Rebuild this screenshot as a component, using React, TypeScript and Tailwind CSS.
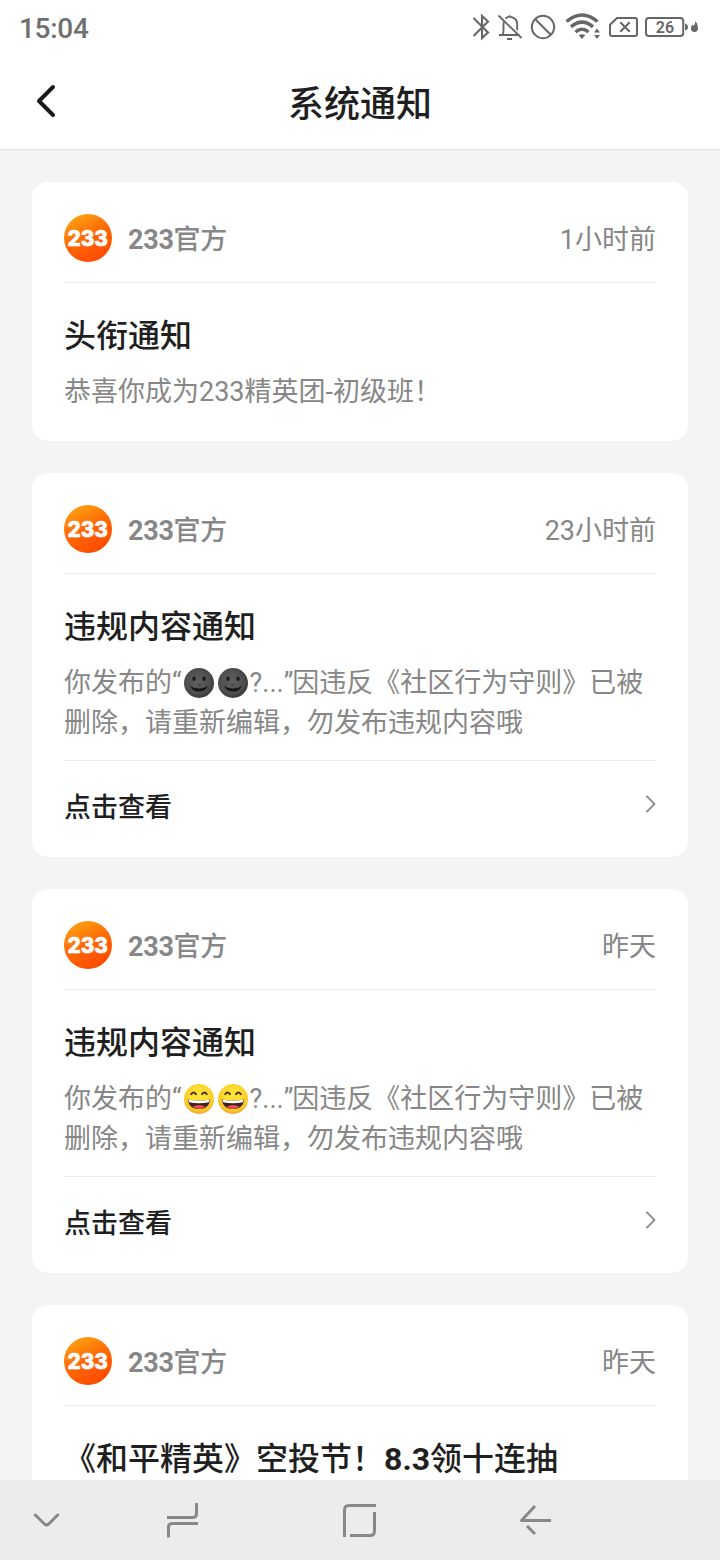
import React from "react";

type Notice = {
  time: string;
  title: React.ReactNode;
  body: React.ReactNode;
  link?: boolean;
};

function Avatar() {
  return (
    <svg className="size-12 shrink-0" viewBox="0 0 48 48">
      <defs>
        <linearGradient id="brand" x1="0.15" y1="0" x2="0.65" y2="1">
          <stop offset="0" stopColor="#ffa914" />
          <stop offset="0.5" stopColor="#ff6a05" />
          <stop offset="1" stopColor="#ff4a00" />
        </linearGradient>
      </defs>
      <circle cx="24" cy="24" r="24" fill="url(#brand)" />
      <text
        x="3.5"
        y="31.5"
        textLength="40.5"
        lengthAdjust="spacingAndGlyphs"
        fill="#fff"
        stroke="#fff"
        strokeWidth="0.6"
        strokeLinejoin="round"
        className="font-['Inter',sans-serif] text-[21.5px] font-extrabold"
      >
        233
      </text>
    </svg>
  );
}

function MoonFace() {
  return (
    <svg className="inline-block h-[32px] w-[34px] align-[-7px]" viewBox="0 0 34 32">
      <defs>
        <radialGradient id="moon" cx="0.45" cy="0.45" r="0.6">
          <stop offset="0" stopColor="#606060" />
          <stop offset="0.7" stopColor="#4d4d4d" />
          <stop offset="1" stopColor="#343434" />
        </radialGradient>
      </defs>
      <circle cx="17" cy="16" r="15" fill="url(#moon)" />
      <ellipse cx="12" cy="11.8" rx="1.6" ry="2.3" fill="#181818" />
      <ellipse cx="22" cy="11.8" rx="1.6" ry="2.3" fill="#181818" />
      <path d="M15.5 17.5q1.5 1 3 0" stroke="#303030" fill="none" />
      <path d="M8 19q9 5 18 0q-2.500 5.500-9 5.500T8 19z" fill="#171717" />
    </svg>
  );
}

function LaughFace() {
  return (
    <svg className="inline-block h-[32px] w-[34px] align-[-7px]" viewBox="0 0 34 32">
      <defs>
        <radialGradient id="laugh" cx="0.5" cy="0.4" r="0.62">
          <stop offset="0.4" stopColor="#ffe033" />
          <stop offset="0.8" stopColor="#fcc828" />
          <stop offset="1" stopColor="#ee9b25" />
        </radialGradient>
      </defs>
      <circle cx="17" cy="16" r="15" fill="url(#laugh)" />
      <g stroke="#4a3425" strokeWidth="2" strokeLinecap="round" fill="none">
        <path d="M9.300 11.200q2.300-3.200 4.600 0" />
        <path d="M20.100 11.200q2.300-3.200 4.600 0" />
      </g>
      <path d="M5.800 16.500q11.200 2.600 22.400 0q-1.200 9.500-11.200 9.500t-11.200-9.500z" fill="#3c2422" />
      <path d="M6.400 16.700q10.600 2.300 21.200 0l-.8 2.600q-9.800 1.800-19.600 0z" fill="#fff" />
      <path d="M10.500 23.800q6.500-3.400 13 0q-3 2.100-6.500 2.100t-6.500-2.100z" fill="#ef4d50" />
    </svg>
  );
}

function Violation({ face }: { face: React.ReactNode }) {
  return (
    <>
      你发布的<span className="font-['Roboto']">“</span>
      {face}
      {face}?...<span className="-mr-px font-['Roboto']">”</span>因违反《社区行为守则》已被
      <br />
      删除，请重新编辑，勿发布违规内容哦
    </>
  );
}

const notices: Notice[] = [
  { time: "1小时前", title: "头衔通知", body: "恭喜你成为233精英团-初级班！" },
  { time: "23小时前", title: "违规内容通知", body: <Violation face={<MoonFace />} />, link: true },
  { time: "昨天", title: "违规内容通知", body: <Violation face={<LaughFace />} />, link: true },
  {
    time: "昨天",
    title: (
      <>
        《和平精英》空投节！<span className="font-bold">8.3</span>领十连抽
      </>
    ),
    body: "",
  },
];

function NoticeCard({ notice }: { notice: Notice }) {
  return (
    <article className="shrink-0 rounded-2xl bg-white px-8">
      <div className="flex h-[101px] items-center border-b border-[#e9e9e9] pt-3 text-[27px] leading-10 text-[#878787]">
        <Avatar />
        <span className="ml-4 flex-1 pt-1 font-medium tracking-[-0.3px]">
          <span className="font-bold">233</span>官方
        </span>
        <span className="pt-1">{notice.time}</span>
      </div>
      <h2 className="pt-[29px] text-[32px] leading-12 font-medium whitespace-nowrap text-[#1f1f1f]">{notice.title}</h2>
      <p className="pt-3 text-[27px] leading-10 whitespace-nowrap text-[#878787]">{notice.body}</p>
      {notice.link ? (
        <div className="mt-[17px] flex h-[97px] items-center justify-between border-t border-[#e9e9e9] pb-1.5 text-[27px] font-medium text-[#1f1f1f]">
          <span className="pt-[5px]">点击查看</span>
          <svg className="mb-[5px] h-5 w-3" viewBox="0 0 12 20" fill="none" stroke="#929292" strokeWidth="2" strokeLinecap="round" strokeLinejoin="round">
            <path d="M3 2.500l7.500 7.500L3 17.500" />
          </svg>
        </div>
      ) : (
        <div className="h-[29px]" />
      )}
    </article>
  );
}

function StatusIcons() {
  return (
    <svg className="h-14 w-[240px]" viewBox="465 0 240 56" fill="none" stroke="#666" strokeWidth="2">
      <path d="M473.500 18l14.500 14.500-6 5.500V16l6 5.500L473.500 36" strokeWidth="2.100" />
      <path d="M498.500 15.500l23 22.500M499 35h20.500M502.500 35c1-1.500 1-2.500 1-5.500v-5c0-1 .2-2 .6-2.800M505.500 18.500c1.200-1 2.200-1.300 3-1.500q1.200-1.500 2.400 0c4 .8 6.300 3.500 6.300 7.200v6" strokeWidth="1.900" />
      <path d="M507 39h5" />
      <circle cx="543" cy="27" r="11.200" strokeWidth="1.900" />
      <path d="M535 19l16 16" strokeWidth="1.900" />
      <g strokeWidth="3.500">
        <path d="M566.500 21.500Q582 8.500 597.500 21.500" />
        <path d="M571 26.800Q582 17.500 593 26.800" />
        <path d="M575.500 32Q582 26.500 588.500 32" />
      </g>
      <path d="M578.700 35.300q3.300-2.300 6.600 0L582 39zM597 28.500l3 4h-6zM594 35h6l-3 4z" fill="#666" stroke="none" />
      <path d="M617 18h18q2 0 2 2v14q0 2-2 2h-23q-2 0-2-2v-9.300z" strokeWidth="2" />
      <path d="M620.300 22.300l9.400 9.400m0-9.400l-9.400 9.400" />
      <rect x="646" y="18" width="37.200" height="18" rx="3" strokeWidth="2" />
      <path d="M685 23.500q3 1 3 3.500t-3 3.500zM695.500 21q2.500 3 2.500 7c0 2.500-1.500 4-3.500 4s-3.500-1.400-3.500-3.600c0-2 1-2.400 1.200-4 1 .5 1.200 1 1.500 1.500q1.600-2 1.800-4.900z" fill="#666" stroke="none" />
      <text x="665" y="32.800" textAnchor="middle" fill="#666" stroke="none" className="text-[16px] font-semibold">
        26
      </text>
    </svg>
  );
}

export default function App() {
  return (
    <main className="flex h-[1560px] w-[720px] flex-col overflow-hidden bg-[#f4f4f4] font-['Roboto','Noto_Sans_CJK_SC',sans-serif]">
      <div className="flex h-14 shrink-0 items-center justify-between bg-white pr-[15px] pl-[19px]">
        <span className="pt-0.5 text-[28px] font-medium tracking-[-0.3px] text-[#707070]">15:04</span>
        <StatusIcons />
      </div>
      <header className="grid h-[94px] shrink-0 grid-cols-[96px_1fr_96px] items-center border-b border-[#e2e2e2] bg-white">
        <svg className="mb-[3px] ml-[34px] h-9 w-6" viewBox="0 0 24 36" fill="none" stroke="#1a1a1a" strokeWidth="4" strokeLinecap="round" strokeLinejoin="round">
          <path d="M19 4L5 18l14 14" />
        </svg>
        <h1 className="pt-[5px] text-center text-[36px] leading-[54px] font-medium text-[#1f1f1f]">系统通知</h1>
      </header>
      <section className="flex min-h-0 flex-1 flex-col gap-8 overflow-hidden px-8 pt-8">
        {notices.map((n, i) => (
          <NoticeCard key={i} notice={n} />
        ))}
      </section>
      <nav className="h-20 shrink-0 bg-[#ececec]">
        <svg className="h-20 w-[720px]" viewBox="0 1480 720 80" fill="none" stroke="#888" strokeWidth="3">
          <path d="M35.300 1515l9.400 9.200q1.900 1.600 3.800 0l9.200-9.200" strokeLinecap="round" />
          <path d="M167 1517.500h25.500q4 0 4-4V1503M168.500 1537.500v-10.500q0-3.500 4-3.500H198" />
          <path d="M344.500 1537v-27q0-4.500 4.500-4.500h27M374.500 1512v19q0 4.500-4.500 4.500h-20" />
          <path d="M551 1520.500h-29.500L535 1506M527 1526l8 8" strokeLinejoin="round" />
        </svg>
      </nav>
    </main>
  );
}
